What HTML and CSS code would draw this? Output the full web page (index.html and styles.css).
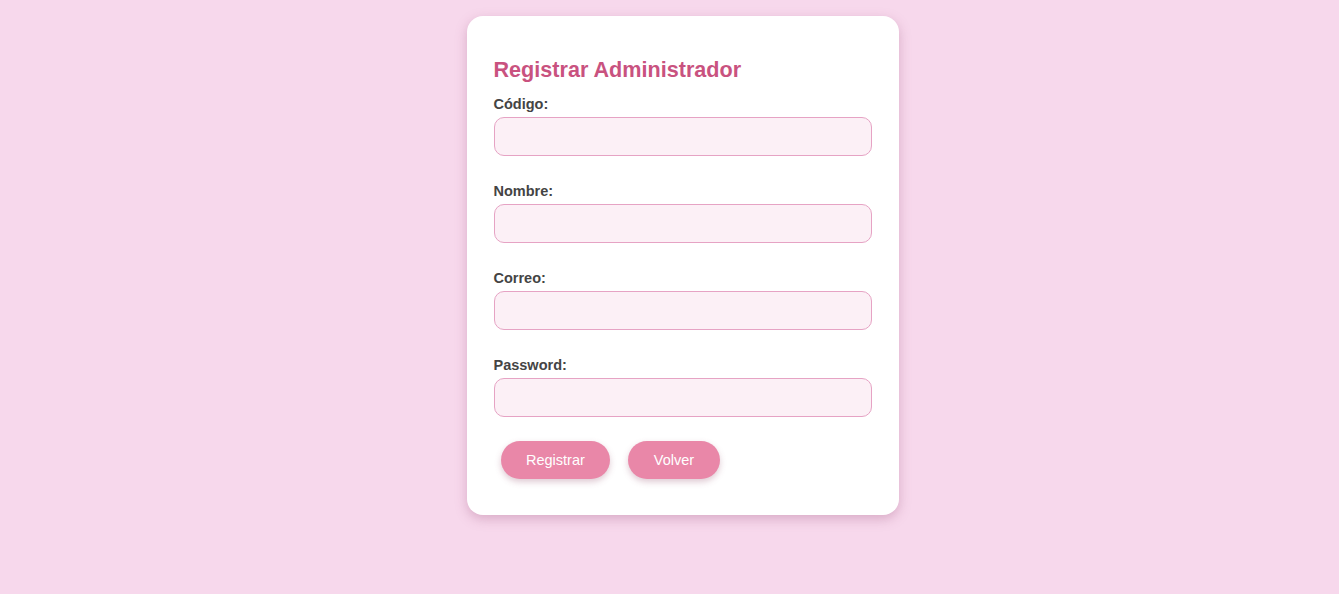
FILE: index.html
```html
<!DOCTYPE html>
<html lang="es">
<head>
<meta charset="utf-8">
<title>Registrar Administrador</title>
<link rel="stylesheet" href="styles.css">
</head>
<body>
<div class="card">
  <h2 class="title">Registrar Administrador</h2>
  <form class="form">
    <label class="label" for="codigo">Código:</label>
    <input class="input" id="codigo" type="text">
    <label class="label" for="nombre">Nombre:</label>
    <input class="input" id="nombre" type="text">
    <label class="label" for="correo">Correo:</label>
    <input class="input" id="correo" type="email">
    <label class="label" for="password">Password:</label>
    <input class="input" id="password" type="password">
    <div class="actions">
      <button class="btn" type="button">Registrar</button>
      <button class="btn" type="button">Volver</button>
    </div>
  </form>
</div>
</body>
</html>
```
FILE: styles.css
```css
html, body {
  margin: 0;
  padding: 0;
}
body {
  background: #f7d8ec;
  font-family: "Liberation Sans", Arial, sans-serif;
  padding-top: 16px;
  min-height: 594px;
  box-sizing: border-box;
}
.card {
  width: 432px;
  box-sizing: border-box;
  margin: 0 auto;
  background: #ffffff;
  border-radius: 16px;
  padding: 27px 27px 36px;
  box-shadow: 0 4px 12px rgba(160, 90, 130, 0.35);
  transform: translateX(13px);
}
.title {
  margin: 14px 0 12px;
  font-size: 21.6px;
  line-height: 26px;
  font-weight: bold;
  color: #c9527f;
}
.form {
  display: flex;
  flex-direction: column;
}
.label {
  display: block;
  font-size: 14.5px;
  line-height: 18px;
  font-weight: bold;
  color: #444444;
  margin-bottom: 4px;
}
.input {
  height: 39px;
  box-sizing: border-box;
  border: 1px solid #e6a3c4;
  border-radius: 10px;
  background: #fcf0f6;
  margin: 0 0 26px;
  padding: 0 10px;
  font-size: 15px;
}
.input:last-of-type {
  margin-bottom: 24px;
}
.actions {
  display: flex;
  gap: 18px;
  padding-left: 7px;
}
.btn {
  height: 38px;
  padding: 0 25.5px;
  border: none;
  border-radius: 19px;
  background: #e987a8;
  color: #ffffff;
  font-family: "Liberation Sans", Arial, sans-serif;
  font-size: 14.5px;
  line-height: 38px;
  box-shadow: 0 3px 6px rgba(150, 80, 110, 0.3);
  cursor: pointer;
}
```
